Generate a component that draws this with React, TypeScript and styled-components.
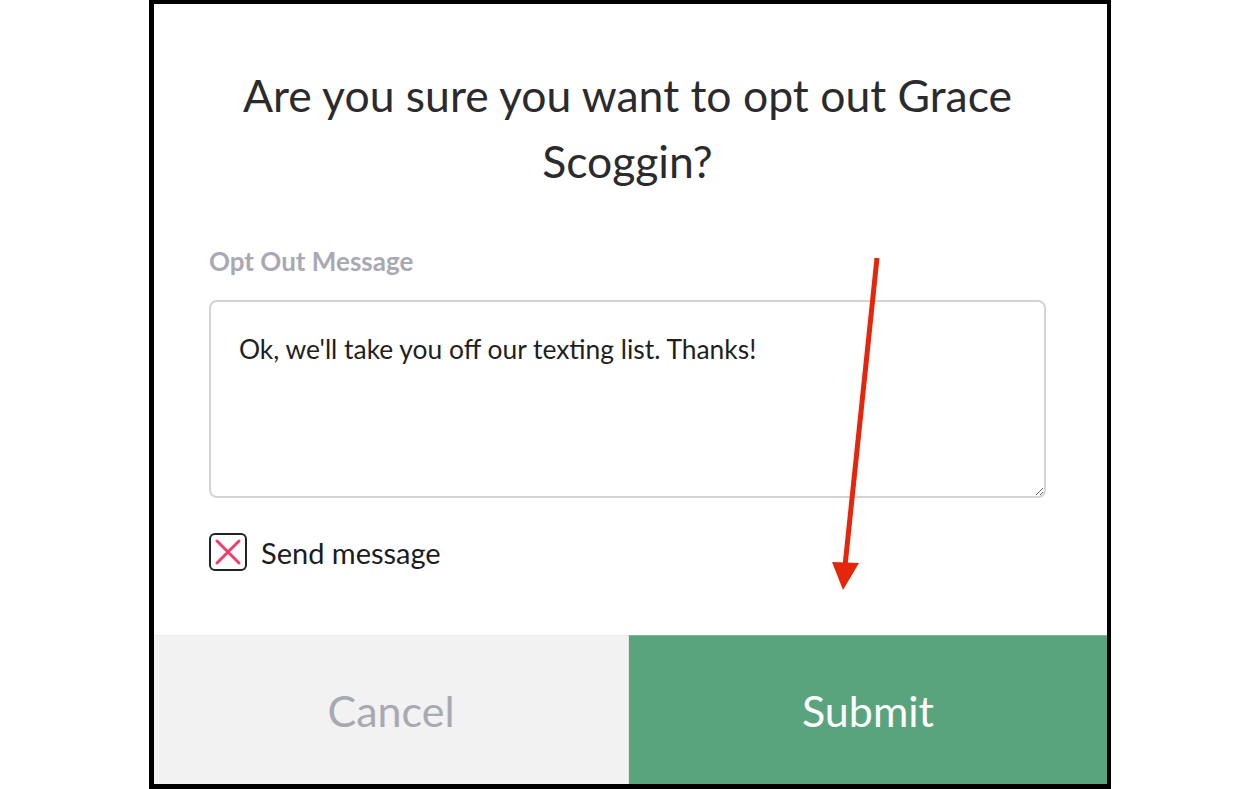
import React from "react";
import styled, { createGlobalStyle } from "styled-components";

const Global = createGlobalStyle`
  html, body { margin: 0; padding: 0; background: #ffffff; }
  body { font-family: Lato, "Open Sans", sans-serif; overflow: hidden; }
  * { box-sizing: border-box; }
`;

const Page = styled.div`
  position: relative;
  width: 1260px;
  height: 789px;
  display: flex;
  justify-content: flex-start;
  padding-left: 149px;
`;

const Frame = styled.div`
  width: 962px;
  height: 789px;
  border-style: solid;
  border-color: #000;
  border-width: 4px 4px 5px 5px;
  display: flex;
  flex-direction: column;
  background: #fff;
`;

const Body = styled.div`
  flex: 1;
  display: flex;
  flex-direction: column;
  padding: 58px 61px 0 55px;
`;

const Title = styled.h1`
  margin: 0 -20px;
  font-family: Lato, sans-serif;
  font-weight: 400;
  font-size: 44.5px;
  line-height: 66px;
  color: #2b2b2e;
  text-align: center;
`;

const Label = styled.label`
  margin-top: 52px;
  font-family: Lato, sans-serif;
  font-weight: 700;
  font-size: 26px;
  line-height: 30px;
  color: #a9a9b4;
`;

const TextBox = styled.textarea`
  margin-top: 24px;
  width: 837px;
  height: 198px;
  border: 2px solid #d4d4d4;
  border-radius: 8px;
  padding: 32px 28px;
  font-family: Lato, sans-serif;
  font-size: 26.4px;
  line-height: 30px;
  color: #1f1f22;
  resize: vertical;
  outline: none;
`;

const CheckRow = styled.div`
  margin-top: 35px;
  display: flex;
  align-items: center;
  gap: 14px;
`;

const Box = styled.span`
  width: 38px;
  height: 38px;
  border: 2px solid #232326;
  border-radius: 6px;
  display: flex;
  align-items: center;
  justify-content: center;
`;

const CheckLabel = styled.span`
  font-family: Lato, sans-serif;
  font-size: 29px;
  color: #1c1c1f;
`;

const Footer = styled.div`
  height: 149px;
  display: grid;
  grid-template-columns: 474px 1fr;
`;

const FooterButton = styled.button<{ $primary?: boolean }>`
  border: none;
  margin: 0;
  font-family: Lato, sans-serif;
  font-size: 43px;
  font-weight: 400;
  background: ${(p) => (p.$primary ? "#5aa47d" : "#f2f2f2")};
  color: ${(p) => (p.$primary ? "#ffffff" : "#a9a9b4")};
  border-top: 1px solid ${(p) => (p.$primary ? "#7fb898" : "#ececec")};
  ${(p) => (p.$primary ? "border-left: 1px solid #e4e4e4;" : "")}
  cursor: pointer;
`;

const ArrowLayer = styled.svg`
  position: absolute;
  left: 0;
  top: 0;
  pointer-events: none;
`;

export default function App() {
  return (
    <>
      <Global />
      <Page>
        <Frame>
          <Body>
            <Title>Are you sure you want to opt out Grace Scoggin?</Title>
            <Label>Opt Out Message</Label>
            <TextBox defaultValue="Ok, we'll take you off our texting list. Thanks!" />
            <CheckRow>
              <Box>
                <svg width="28" height="28" viewBox="0 0 28 28">
                  <path d="M3 3 L25 25 M25 3 L3 25" stroke="#ec3d6c" strokeWidth="3" strokeLinecap="round" />
                </svg>
              </Box>
              <CheckLabel>Send message</CheckLabel>
            </CheckRow>
          </Body>
          <Footer>
            <FooterButton>Cancel</FooterButton>
            <FooterButton $primary>Submit</FooterButton>
          </Footer>
        </Frame>
        <ArrowLayer width="1260" height="789" viewBox="0 0 1260 789">
          <line x1="877" y1="258" x2="845" y2="566" stroke="#e5260c" strokeWidth="5" />
          <polygon points="832,562 859,563 843,590" fill="#e5260c" />
        </ArrowLayer>
      </Page>
    </>
  );
}
